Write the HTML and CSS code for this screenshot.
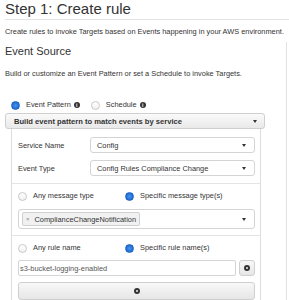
FILE: index.html
```html
<!DOCTYPE html>
<html lang="en">
<head>
  <meta charset="UTF-8">
  <title>Step 1: Create rule</title>
  <link rel="stylesheet" href="styles.css">
</head>
<body>
  <h1 class="page-title">Step 1: Create rule</h1>
  <p class="intro">Create rules to invoke Targets based on Events happening in your AWS environment.</p>

  <div class="layout">
    <div class="source">
      <h2 class="section-title">Event Source</h2>
      <p class="section-help">Build or customize an Event Pattern or set a Schedule to invoke Targets.</p>

      <div class="mode-row">
        <label class="radio-item"><span class="radio checked"></span>Event Pattern <span class="info">i</span></label>
        <label class="radio-item"><span class="radio"></span>Schedule <span class="info">i</span></label>
      </div>

      <div class="builder-toggle">
        <span>Build event pattern to match events by service</span>
        <span class="caret"></span>
      </div>

      <div class="builder">
        <div class="builder-section fields">
          <div class="field-row">
            <span class="field-label">Service Name</span>
            <div class="select"><span>Config</span><span class="caret"></span></div>
          </div>
          <div class="field-row">
            <span class="field-label">Event Type</span>
            <div class="select"><span>Config Rules Compliance Change</span><span class="caret"></span></div>
          </div>
        </div>

        <div class="builder-section">
          <div class="choice-row">
            <label class="radio-item"><span class="radio"></span>Any message type</label>
            <label class="radio-item"><span class="radio checked"></span>Specific message type(s)</label>
          </div>
          <div class="tag-select">
            <span class="tag"><span class="tag-remove">×</span>ComplianceChangeNotification</span>
            <span class="caret"></span>
          </div>
        </div>

        <div class="builder-section">
          <div class="choice-row">
            <label class="radio-item"><span class="radio"></span>Any rule name</label>
            <label class="radio-item"><span class="radio checked"></span>Specific rule name(s)</label>
          </div>
          <div class="input-row">
            <input class="text-input" type="text" spellcheck="false" autocomplete="off" value="s3-bucket-logging-enabled">
            <button class="icon-btn" type="button"><span class="dot-icon"></span></button>
          </div>
          <button class="add-btn" type="button"><span class="dot-icon"></span></button>
        </div>
      </div>
    </div>
    <div class="targets"></div>
  </div>
</body>
</html>
```

FILE: styles.css
```css
* {
  box-sizing: border-box;
}

body {
  margin: 0;
  padding: 0 0 0 5px;
  font-family: 'Liberation Sans', Arial, sans-serif;
  font-size: 7.4px;
  color: #444;
  background: #fff;
  overflow: hidden;
}

.page-title {
  margin: 0;
  font-size: 15px;
  font-weight: normal;
  line-height: 18px;
  color: #333;
  padding-bottom: 1px;
  border-bottom: 1px solid #e4e4e4;
}

.intro {
  margin: 7px 0 0;
  line-height: 10px;
  color: #333;
  white-space: nowrap;
}

.layout {
  display: flex;
  margin-top: 5px;
}

.source {
  width: 281px;
  flex: none;
}

.targets {
  flex: 1;
  border-left: 1px solid #e2e2e2;
  min-height: 260px;
}

.section-title {
  margin: 2px 0 0;
  font-size: 11px;
  font-weight: normal;
  line-height: 14px;
  color: #333;
}

.section-help {
  margin: 11px 0 0;
  line-height: 10px;
  color: #333;
}

.mode-row {
  display: flex;
  align-items: center;
  height: 12px;
  margin: 20px 0 0 6px;
  gap: 11px;
}

.radio-item {
  display: flex;
  align-items: center;
  gap: 6px;
  line-height: 12px;
  color: #333;
  white-space: nowrap;
}

.radio {
  width: 9px;
  height: 9px;
  border-radius: 50%;
  border: 1px solid #c8c8c8;
  background: linear-gradient(#fff, #f1f1f1);
  flex: none;
}

.radio.checked {
  border-color: #1d63c4;
  background: radial-gradient(circle, #4a95ec 0, #2873da 55%, #1c62c7 100%);
}

.info {
  display: inline-block;
  width: 6px;
  height: 6px;
  border-radius: 50%;
  background: #333;
  color: #fff;
  font-size: 5px;
  font-weight: bold;
  line-height: 6px;
  text-align: center;
  margin-left: -3px;
}

.builder-toggle {
  display: flex;
  justify-content: space-between;
  align-items: center;
  width: 260px;
  height: 16px;
  margin-top: 2px;
  padding: 0 7px 0 8px;
  border: 1px solid #cfcfcf;
  border-radius: 3px;
  background: linear-gradient(#fafafa, #e9e9e9);
  font-size: 7.6px;
  font-weight: bold;
  color: #333;
}

.caret {
  width: 0;
  height: 0;
  border-left: 2.5px solid transparent;
  border-right: 2.5px solid transparent;
  border-top: 3px solid #333;
  flex: none;
}

.builder {
  width: 250px;
  margin-left: 6px;
  border-left: 1px solid #ddd;
  border-right: 1px solid #ddd;
}

.builder-section {
  padding: 6px 5px 6px 6px;
  border-top: 1px solid #e4e4e4;
  display: flex;
  flex-direction: column;
  gap: 6px;
}

.builder-section.fields {
  border-top: none;
  padding: 8px 5px 7px 6px;
  gap: 7px;
}

.field-row {
  display: grid;
  grid-template-columns: 72px 1fr;
  align-items: center;
}

.field-label {
  color: #333;
}

.select,
.tag-select {
  display: flex;
  justify-content: space-between;
  align-items: center;
  height: 16px;
  padding: 0 8px 0 6px;
  border: 1px solid #d4d4d4;
  border-radius: 3px;
  background: #fff;
  color: #333;
}

.choice-row {
  display: grid;
  grid-template-columns: 107px 1fr;
  height: 12px;
  align-items: center;
}

.tag-select {
  height: 20px;
  padding-left: 3px;
  margin-top: 1px;
}

.tag {
  display: flex;
  align-items: center;
  height: 14px;
  padding: 0 3px;
  border: 1px solid #cfcfcf;
  border-radius: 2px;
  background: #f1f1f1;
  color: #333;
}

.tag-remove {
  color: #888;
  font-size: 6px;
  margin-right: 5px;
}

.input-row {
  display: flex;
  gap: 3px;
}

.text-input {
  flex: 1;
  min-width: 0;
  height: 16px;
  margin: 0;
  padding: 0 1px;
  border: 1px solid #d4d4d4;
  border-radius: 2px;
  font-family: inherit;
  font-size: 7.4px;
  color: #555;
  background: #fff;
}

.icon-btn,
.add-btn {
  display: flex;
  align-items: center;
  justify-content: center;
  margin: 0;
  padding: 0;
  border: 1px solid #cfcfcf;
  border-radius: 3px;
  background: linear-gradient(#f8f8f8, #e6e6e6);
}

.icon-btn {
  width: 16px;
  height: 16px;
}

.add-btn {
  width: 100%;
  height: 18px;
}

.dot-icon {
  width: 6px;
  height: 6px;
  border-radius: 50%;
  border: 2px solid #333;
  background: #eee;
}
```
